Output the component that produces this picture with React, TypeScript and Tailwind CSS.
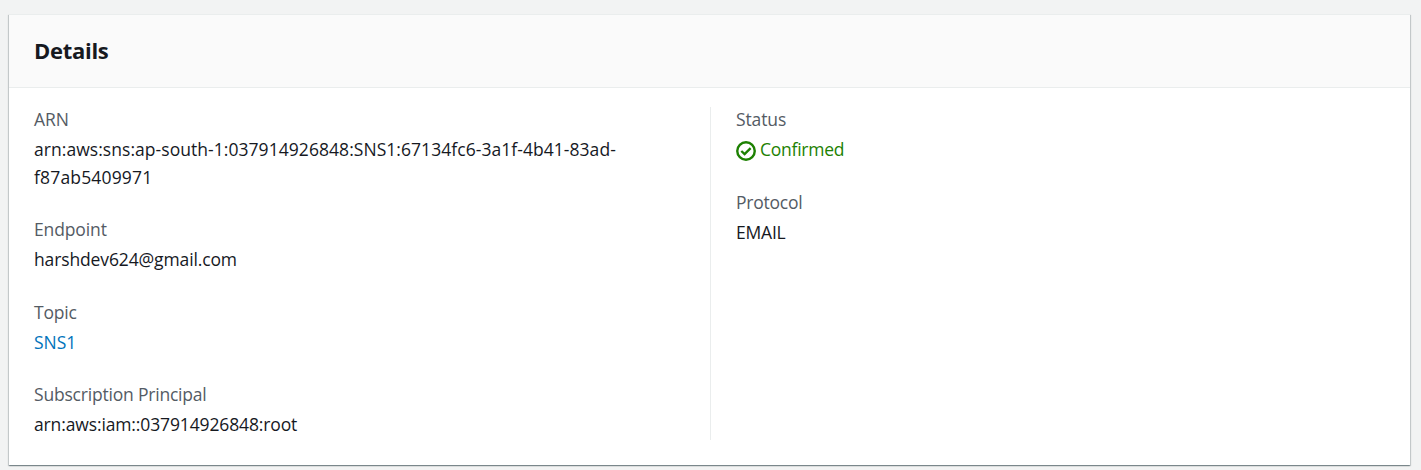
import type { ReactNode } from "react";

function Field({ label, tracking, children }: { label: string; tracking: string; children: ReactNode }) {
  return (
    <div className="text-[17.5px] leading-[27.5px]">
      <div className="h-[30px] text-[#545b64]">
        <span className={tracking}>{label}</span>
      </div>
      <div>{children}</div>
    </div>
  );
}

function CheckIcon() {
  return (
    <svg className="mt-[4.3px] h-5 w-5 shrink-0" viewBox="0 0 20 20" fill="none" stroke="#1d8102" strokeWidth="2.4">
      <circle cx="10" cy="10" r="8.75" />
      <path d="M5.3 10l3.3 3.1 6-5.9" />
    </svg>
  );
}

export default function App() {
  return (
    <main className="h-[470px] overflow-hidden bg-[#f2f3f3] pt-[14px] pl-[9px] font-['Open_Sans',sans-serif] text-[#16191f]">
      <section className="h-[451px] w-[1401px] border-t border-[#eaeded] bg-white shadow-[0_1px_1px_rgba(0,28,36,0.3),1px_1px_1px_rgba(0,28,36,0.15),-1px_1px_1px_rgba(0,28,36,0.15)]">
        <header className="flex h-[73px] items-center border-b border-[#eaeded] bg-[#fafafa] px-[25px] pb-[2px]">
          <h2 className="text-[22px] font-[670] tracking-[-0.28px]">Details</h2>
        </header>
        <div className="flex pt-[19px]">
          <div className="h-[333px] w-[702px] border-r border-[#eaeded] pl-[25px]">
            <div className="-mt-[0.7px] flex flex-col gap-[25px]">
              <Field label="ARN" tracking="tracking-[-0.1px]">
                <span className="tracking-[0.05px]">arn:aws:sns:ap-south-1:037914926848:SNS1:67134fc6-3a1f-4b41-83ad-</span>
                <br />
                <span className="tracking-[0.16px]">f87ab5409971</span>
              </Field>
              <Field label="Endpoint" tracking="tracking-[-0.13px]">
                <span className="tracking-[-0.13px]">harshdev624@gmail.com</span>
              </Field>
              <Field label="Topic" tracking="tracking-[-0.2px]">
                <a href="#" className="text-[#0073bb]">SNS1</a>
              </Field>
              <Field label="Subscription Principal" tracking="tracking-[-0.2px]">
                <span className="tracking-[-0.13px]">arn:aws:iam::037914926848:root</span>
              </Field>
            </div>
          </div>
          <div className="-mt-[0.7px] flex flex-col gap-[25px] pl-[25px]">
            <Field label="Status" tracking="tracking-[-0.13px]">
              <span className="flex h-[27.5px] gap-1 text-[#1d8102]">
                <CheckIcon />
                <span className="tracking-[-0.25px]">Confirmed</span>
              </span>
            </Field>
            <Field label="Protocol" tracking="tracking-[-0.22px]">
              <span className="tracking-[-0.2px]">EMAIL</span>
            </Field>
          </div>
        </div>
      </section>
    </main>
  );
}
